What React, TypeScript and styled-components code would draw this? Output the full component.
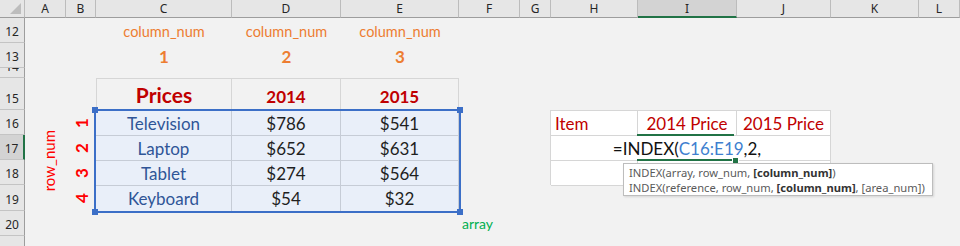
import React from 'react';
import styled, { createGlobalStyle, css } from 'styled-components';

const GlobalStyle = createGlobalStyle`
  html, body {
    margin: 0;
    padding: 0;
    background: #f2f2f2;
  }
  body {
    width: 960px;
    height: 246px;
    overflow: hidden;
  }
`;

const COLUMNS: [string, number][] = [
  ['A', 41],
  ['B', 30],
  ['C', 136],
  ['D', 109],
  ['E', 118],
  ['F', 61],
  ['G', 31],
  ['H', 87],
  ['I', 99],
  ['J', 94],
  ['K', 88],
  ['L', 41],
];

// row 21 only peeks in at the bottom edge, its label is below the fold
const ROWS: [number, number, boolean][] = [
  [12, 25, true],
  [13, 25, true],
  [14, 10, true],
  [15, 32, true],
  [16, 25, true],
  [17, 25, true],
  [18, 25, true],
  [19, 26, true],
  [20, 25, true],
  [21, 25, false],
];

const ITEMS = [
  { name: 'Television', y2014: '$786', y2015: '$541' },
  { name: 'Laptop', y2014: '$652', y2015: '$631' },
  { name: 'Tablet', y2014: '$274', y2015: '$564' },
  { name: 'Keyboard', y2014: '$54', y2015: '$32' },
];

// grid lines: col 1 = row headers, A = 2 ... L = 13; row 1 = col headers, 12 = 2 ...
const colIdx = (letter: string) => letter.charCodeAt(0) - 63;
const rowIdx = (n: number) => n - 10;

const CELL_FONT = `Lato, 'Liberation Sans', sans-serif`;
const UI_FONT = `'Noto Sans', 'Liberation Sans', sans-serif`;

interface PlaceProps {
  $col: number;
  $row: number;
  $cs?: number;
  $rs?: number;
}

const placed = css<PlaceProps>`
  grid-column: ${(p) => p.$col} / span ${(p) => p.$cs ?? 1};
  grid-row: ${(p) => p.$row} / span ${(p) => p.$rs ?? 1};
`;

const Sheet = styled.div`
  position: relative;
  display: grid;
  grid-template-columns: 25px ${COLUMNS.map(([, w]) => `${w}px`).join(' ')};
  grid-template-rows: 18px ${ROWS.map(([, h]) => `${h}px`).join(' ')};
  width: 960px;
  height: 246px;
  overflow: hidden;
  background: #f2f2f2;
`;

const Corner = styled.div`
  grid-column: 1;
  grid-row: 1;
  background: #e6e6e6;
  border-right: 1px solid #bcbcbc;
  border-bottom: 1px solid #9d9d9d;
  box-sizing: border-box;
  display: flex;
  align-items: flex-end;
  justify-content: flex-end;
  padding: 0 3px 3px 0;
`;

const ColHead = styled.div<{ $col: number; $active?: boolean }>`
  grid-column: ${(p) => p.$col};
  grid-row: 1;
  display: flex;
  align-items: center;
  justify-content: center;
  box-sizing: border-box;
  font-family: ${UI_FONT};
  font-size: 12px;
  color: #262626;
  background: ${(p) => (p.$active ? '#d3d3d3' : '#e6e6e6')};
  border-right: 1px solid #bcbcbc;
  border-bottom: ${(p) => (p.$active ? '2px solid #217346' : '1px solid #9d9d9d')};
  padding-top: ${(p) => (p.$active ? '1px' : '0')};
`;

const RowHead = styled.div<{ $row: number; $active?: boolean }>`
  grid-column: 1;
  grid-row: ${(p) => p.$row};
  display: flex;
  align-items: flex-end;
  justify-content: center;
  overflow: hidden;
  box-sizing: border-box;
  padding-bottom: 3px;
  font-family: ${UI_FONT};
  font-size: 12px;
  line-height: 14px;
  color: #262626;
  background: ${(p) => (p.$active ? '#d3d3d3' : '#e6e6e6')};
  border-bottom: 1px solid #c4c4c4;
  border-right: ${(p) => (p.$active ? '2px solid #217346' : '1px solid #9d9d9d')};
`;

const ArgLabel = styled.div<PlaceProps>`
  ${placed};
  display: flex;
  align-items: flex-end;
  justify-content: center;
  padding-bottom: 3px;
  font-family: ${CELL_FONT};
  font-size: 14.5px;
  color: #ed7d31;
`;

const ArgIndex = styled(ArgLabel)`
  font-size: 17px;
  font-weight: 700;
  padding-bottom: 1px;
`;

const Vertical = styled.div<PlaceProps>`
  ${placed};
  display: flex;
  align-items: center;
  font-family: ${CELL_FONT};
  color: #ff0000;
  & > span {
    writing-mode: vertical-rl;
    transform: rotate(180deg);
  }
`;

const RowNumLabel = styled(Vertical)`
  justify-content: flex-end;
  padding-right: 8px;
  font-size: 15px;
`;

const RowIndex = styled(Vertical)`
  justify-content: center;
  font-size: 17px;
  font-weight: 700;
`;

const PriceTable = styled.div<PlaceProps>`
  ${placed};
  display: grid;
  grid-template-columns: 136px 109px 118px;
  grid-template-rows: 32px 25px 25px 25px 26px;
  box-sizing: border-box;
  font-family: ${CELL_FONT};
`;

const HeadCell = styled.div<{ $big?: boolean }>`
  display: flex;
  align-items: center;
  justify-content: center;
  box-sizing: border-box;
  border-top: 1px solid #d6d6d6;
  border-right: 1px solid #d6d6d6;
  &:first-child {
    border-left: 1px solid #d6d6d6;
  }
  color: #c00000;
  font-weight: 700;
  font-size: ${(p) => (p.$big ? '21px' : '17px')};
  padding-top: ${(p) => (p.$big ? '0' : '3px')};
`;

const DataCell = styled.div<{ $item?: boolean }>`
  display: flex;
  align-items: center;
  justify-content: center;
  box-sizing: border-box;
  background: #e9eff9;
  border-top: 1px solid #c6ccd6;
  border-right: 1px solid #c6ccd6;
  font-size: 17px;
  color: ${(p) => (p.$item ? '#2f5597' : '#1f1f1f')};
`;

const Selection = styled.div<PlaceProps>`
  ${placed};
  position: relative;
  margin: -1px -2px -2px -2px;
  border: 2px solid #3c6fc7;
  pointer-events: none;
`;

const Handle = styled.span<{ $right?: boolean; $bottom?: boolean }>`
  position: absolute;
  width: 6px;
  height: 6px;
  background: #3c6fc7;
  ${(p) => (p.$right ? 'right: -4px;' : 'left: -4px;')}
  ${(p) => (p.$bottom ? 'bottom: -4px;' : 'top: -4px;')}
`;

const ArrayLabel = styled.div<PlaceProps>`
  ${placed};
  display: flex;
  align-items: center;
  padding-left: 3px;
  font-family: ${CELL_FONT};
  font-size: 14px;
  color: #00b050;
`;

const LookupTable = styled.div<PlaceProps>`
  ${placed};
  display: grid;
  grid-template-columns: 87px 99px 94px;
  grid-template-rows: 25px 25px 25px;
  box-sizing: border-box;
  border-top: 1px solid #d6d6d6;
  border-left: 1px solid #d6d6d6;
  margin-left: -1px;
  font-family: ${CELL_FONT};
`;

const LookupHead = styled.div<{ $left?: boolean }>`
  display: flex;
  align-items: center;
  justify-content: ${(p) => (p.$left ? 'flex-start' : 'center')};
  padding-left: ${(p) => (p.$left ? '4px' : '0')};
  box-sizing: border-box;
  background: #ffffff;
  border-right: 1px solid #d6d6d6;
  border-bottom: 1px solid #d6d6d6;
  font-size: 17px;
  color: #c00000;
`;

const BlankCell = styled.div<{ $edge?: boolean }>`
  background: #ffffff;
  box-sizing: border-box;
  border-bottom: 1px solid #d6d6d6;
  border-right: ${(p) => (p.$edge ? '1px solid #d6d6d6' : 'none')};
`;

const FormulaCell = styled.div`
  position: relative;
  z-index: 1;
  display: flex;
  align-items: center;
  justify-content: center;
  white-space: nowrap;
  background: #ffffff;
  box-sizing: border-box;
  border-bottom: 1px solid #d6d6d6;
  font-size: 17px;
  color: #111111;
  &::after {
    content: '';
    position: absolute;
    left: -1px;
    right: 3px;
    top: -2px;
    bottom: -1px;
    border-top: 2px solid #217346;
    border-bottom: 2px solid #217346;
    pointer-events: none;
  }
`;

const RangeRef = styled.span`
  color: #3f7fcf;
`;

const Caret = styled.span`
  display: inline-block;
  width: 1px;
  height: 19px;
  margin-left: 1px;
  background: #000000;
`;

const FillHandle = styled.span`
  position: absolute;
  right: -2px;
  bottom: -4px;
  width: 5px;
  height: 5px;
  background: #217346;
  border: 1px solid #ffffff;
  z-index: 2;
`;

const Tooltip = styled.div`
  position: absolute;
  left: 623px;
  top: 163px;
  width: 310px;
  height: 33px;
  box-sizing: border-box;
  padding: 1px 0 0 5px;
  background: #ffffff;
  border: 1px solid #bdbdbd;
  box-shadow: 1px 1px 2px rgba(0, 0, 0, 0.12);
  font-family: ${UI_FONT};
  font-size: 11.2px;
  line-height: 15px;
  white-space: nowrap;
  color: #5a5a5a;
  z-index: 3;
  & b {
    color: #333333;
    font-weight: 700;
  }
`;

const CornerMark = () => (
  <svg width="11" height="11" viewBox="0 0 11 11">
    <polygon points="11,0 11,11 0,11" fill="#bdbdbd" />
  </svg>
);

export default function App() {
  return (
    <>
      <GlobalStyle />
      <Sheet>
        <Corner>
          <CornerMark />
        </Corner>
        {COLUMNS.map(([letter]) => (
          <ColHead key={letter} $col={colIdx(letter)} $active={letter === 'I'}>
            {letter}
          </ColHead>
        ))}
        {ROWS.map(([n, , shown]) => (
          <RowHead key={n} $row={rowIdx(n)} $active={n === 17}>
            {shown ? n : null}
          </RowHead>
        ))}

        {['C', 'D', 'E'].map((letter, i) => (
          <React.Fragment key={letter}>
            <ArgLabel $col={colIdx(letter)} $row={rowIdx(12)}>
              column_num
            </ArgLabel>
            <ArgIndex $col={colIdx(letter)} $row={rowIdx(13)}>
              {i + 1}
            </ArgIndex>
          </React.Fragment>
        ))}

        <RowNumLabel $col={colIdx('A')} $row={rowIdx(16)} $rs={4}>
          <span>row_num</span>
        </RowNumLabel>
        {ITEMS.map((_, i) => (
          <RowIndex key={i} $col={colIdx('B')} $row={rowIdx(16 + i)}>
            <span>{i + 1}</span>
          </RowIndex>
        ))}

        <PriceTable $col={colIdx('C')} $row={rowIdx(15)} $cs={3} $rs={5}>
          <HeadCell $big>Prices</HeadCell>
          <HeadCell>2014</HeadCell>
          <HeadCell>2015</HeadCell>
          {ITEMS.map((it) => (
            <React.Fragment key={it.name}>
              <DataCell $item>{it.name}</DataCell>
              <DataCell>{it.y2014}</DataCell>
              <DataCell>{it.y2015}</DataCell>
            </React.Fragment>
          ))}
        </PriceTable>
        <Selection $col={colIdx('C')} $row={rowIdx(16)} $cs={3} $rs={4}>
          <Handle />
          <Handle $right />
          <Handle $bottom />
          <Handle $right $bottom />
        </Selection>
        <ArrayLabel $col={colIdx('F')} $row={rowIdx(20)} $cs={2}>
          array
        </ArrayLabel>

        <LookupTable $col={colIdx('H')} $row={rowIdx(16)} $cs={3} $rs={3}>
          <LookupHead $left>Item</LookupHead>
          <LookupHead>2014 Price</LookupHead>
          <LookupHead>2015 Price</LookupHead>
          <BlankCell />
          <FormulaCell>
            =INDEX(<RangeRef>C16:E19</RangeRef>,2,
            <Caret />
            <FillHandle />
          </FormulaCell>
          <BlankCell $edge />
          <BlankCell $edge />
          <BlankCell $edge />
          <BlankCell $edge />
        </LookupTable>

        <Tooltip>
          <div>
            INDEX(array, row_num, <b>[column_num]</b>)
          </div>
          <div>
            INDEX(reference, row_num, <b>[column_num]</b>, [area_num])
          </div>
        </Tooltip>
      </Sheet>
    </>
  );
}
